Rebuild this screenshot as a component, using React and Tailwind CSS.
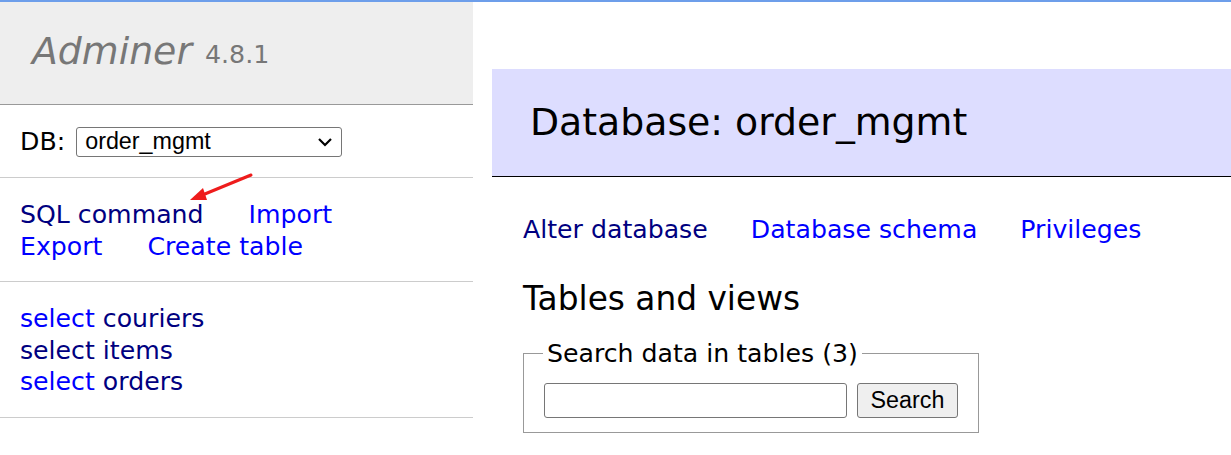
import React from "react";

const tables = [
  { name: "couriers", visited: false },
  { name: "items", visited: true },
  { name: "orders", visited: false },
];

export default function App() {
  return (
    <div className="relative w-[1231px] h-[455px] overflow-hidden bg-white font-['DejaVu_Sans',Verdana,sans-serif] text-[25.2px] leading-[31.5px] text-black">
      <div className="h-[2px] bg-[#6d9eea]" />

      <div className="flex">
        {/* Menu */}
        <aside className="w-[473px] shrink-0">
          <div className="h-[103px] bg-[#eeeeee] border-b border-[#999] flex items-center pl-[32px] pb-[2px]">
            <span className="italic text-[37.8px] text-[#777]">Adminer</span>
            <span className="ml-[13px] mt-[6px] text-[25.3px] text-[#777]">4.8.1</span>
          </div>

          <div className="px-[20px] pt-[2px] border-b border-[#ccc] flex items-center h-[73px]">
            <span>DB:</span>
            <div className="ml-[11px] w-[266px] h-[30px] border border-[#767676] rounded-[3px] flex items-center justify-between pl-[8px] pr-[8px] font-['Liberation_Sans',Arial,sans-serif] text-[23.3px]">
              <span>order_mgmt</span>
              <svg width="16" height="10" viewBox="0 0 16 10" fill="none">
                <path d="M2 2 L8 8 L14 2" stroke="#000" strokeWidth="2.2" />
              </svg>
            </div>
          </div>

          <div className="px-[20px] pt-[21px] border-b border-[#ccc] h-[104px]">
            <div className="flex gap-[45px]">
              <span className="text-[#000080]">SQL command</span>
              <span className="text-[#0000ff]">Import</span>
            </div>
            <div className="flex gap-[45px]">
              <span className="text-[#0000ff]">Export</span>
              <span className="text-[#0000ff]">Create table</span>
            </div>
          </div>

          <div className="px-[20px] pt-[21px] border-b border-[#ccc] h-[136px]">
            {tables.map((t) => (
              <div key={t.name}>
                <span className={t.visited ? "text-[#000080]" : "text-[#0000ff]"}>select</span>{" "}
                <span className="text-[#000080]">{t.name}</span>
              </div>
            ))}
          </div>
        </aside>

        {/* Content */}
        <main className="flex-1 pl-[19px] pt-[67px]">
          <h2 className="h-[108px] bg-[#ddddff] border-b border-black pl-[38px] flex items-center text-[37.8px] font-normal">
            Database: order_mgmt
          </h2>

          <div className="pl-[31px]">
            <div className="mt-[37px] flex gap-[43px]">
              <span className="text-[#000080]">Alter database</span>
              <span className="text-[#0000ff]">Database schema</span>
              <span className="text-[#0000ff]">Privileges</span>
            </div>

            <h3 className="mt-[33px] text-[32.8px] leading-[41px] font-normal">Tables and views</h3>

            <fieldset className="mt-[18px] w-[455px] h-[95px] border border-[#999] px-[20px]">
              <legend className="px-[4px] -ml-[1px]">Search data in tables (3)</legend>
              <div className="flex items-center gap-[10px] mt-[14px]">
                <div className="w-[303px] h-[35px] border border-[#767676] rounded-[3px] bg-white" />
                <div className="w-[101px] h-[35px] border border-[#767676] rounded-[3px] bg-[#efefef] flex items-center justify-center font-['Liberation_Sans',Arial,sans-serif] text-[23.3px]">
                  Search
                </div>
              </div>
            </fieldset>
          </div>
        </main>
      </div>

      {/* annotation arrow */}
      <svg className="absolute left-0 top-0 pointer-events-none" width="1231" height="455">
        <line x1="251" y1="175" x2="200" y2="196" stroke="#ee1c1c" strokeWidth="3" strokeLinecap="round" />
        <polygon points="190,200 203,188 207,200" fill="#ee1c1c" />
      </svg>
    </div>
  );
}
